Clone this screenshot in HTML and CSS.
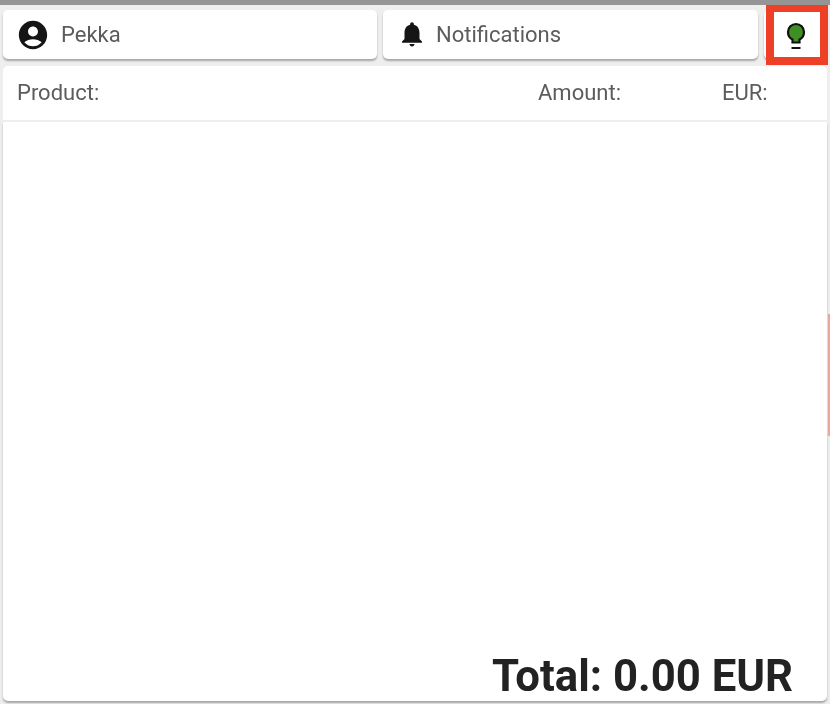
FILE: index.html
```html
<!DOCTYPE html>
<html>
  <head>
    <title>Checkout</title>
    <link rel="stylesheet" href="styles.css">
  </head>
  <body>
    <div id="topbar"></div>
    <div id="toolbar">
      <button class="tool">
        <svg class="icon" viewBox="0 0 24 24"><path d="M12 2C6.48 2 2 6.48 2 12s4.48 10 10 10 10-4.48 10-10S17.52 2 12 2zm0 4c1.93 0 3.5 1.57 3.5 3.5S13.93 13 12 13s-3.5-1.57-3.5-3.5S10.07 6 12 6zm0 14c-2.03 0-4.43-.82-6.14-2.88C7.55 15.8 9.68 15 12 15s4.45.8 6.14 2.12C16.43 19.18 14.03 20 12 20z"/></svg>
        <span>Pekka</span>
      </button>
      <button class="tool" id="notify">
        <svg class="icon" viewBox="0 0 24 24"><path d="M12 22c1.1 0 2-.9 2-2h-4c0 1.1.9 2 2 2zm6-6v-5c0-3.07-1.64-5.64-4.500-6.320V4c0-.83-.67-1.500-1.500-1.500s-1.500.67-1.500 1.500v.68C7.630 5.360 6 7.920 6 11v5l-2 2v1h16v-1l-2-2z"/></svg>
        <span>Notifications</span>
      </button>
      <button class="tool" id="status">
        <svg id="bulb" viewBox="0 0 24 32">
          <path d="M8.500 23.500v-3C5.500 19 4 16 4 13a8 8 0 0 1 16 0c0 3-1.500 6-4.500 7.500v3z" fill="#3f8f24" stroke="#111" stroke-width="2.200"/>
          <path d="M7.500 29h9" stroke="#111" stroke-width="2"/>
        </svg>
      </button>
    </div>
    <div id="columns">
      <span>Product:</span>
      <span>Amount:</span>
      <span>EUR:</span>
    </div>
    <div id="cart">
      <div id="total">Total: 0.00 EUR</div>
    </div>
    <div id="highlight"></div>
    <div id="edge"></div>
  </body>
</html>
```

FILE: styles.css
```css
html,
body {
  height: 100%;
}

body {
  margin: 0;
  background-color: #eeeeee;
  font-family: Roboto, sans-serif;
  color: #5c5c5c;
  display: flex;
  flex-direction: column;
  overflow: hidden;
}

/* the reference is a soft, scaled-up capture */
#topbar,
#toolbar,
#columns,
#cart {
  filter: blur(0.6px);
}

#topbar {
  height: 5px;
  background-color: #959595;
}

#toolbar {
  display: flex;
  gap: 6px;
  padding: 5px 3px 0 3px;
}

.tool {
  flex: 1;
  height: 49px;
  display: flex;
  align-items: center;
  gap: 11px;
  padding: 0 0 0 13px;
  border: none;
  border-radius: 5px;
  background-color: white;
  color: inherit;
  font-family: inherit;
  font-size: 22px;
  box-shadow: 0 2px 2px 0 rgba(0, 0, 0, 0.3);
}

.icon {
  width: 34px;
  height: 34px;
  fill: #151515;
}

#notify {
  gap: 9px;
  padding-left: 14px;
}

#notify .icon {
  width: 30px;
  height: 30px;
  margin-bottom: 2px;
}

#status {
  flex: 0 0 63px;
  padding: 0;
  justify-content: center;
}

#bulb {
  width: 24px;
  height: 32px;
  fill: none;
}

#columns {
  display: grid;
  grid-template-columns: 521px 184px 1fr;
  align-items: center;
  height: 52px;
  margin: 7px 3px 0 3px;
  padding: 0 0 2px 14px;
  background-color: white;
  border-radius: 5px 5px 0 0;
  font-size: 22px;
}

#cart {
  flex: 1;
  display: flex;
  align-items: flex-end;
  justify-content: flex-end;
  margin: 2px 3px 3px 3px;
  padding-right: 34px;
  background-color: white;
  border-radius: 0 0 5px 5px;
  box-shadow: 0 2px 2px 0 rgba(0, 0, 0, 0.3);
}

#total {
  color: #222222;
  font-size: 43.7px;
  font-weight: 700;
  line-height: 50px;
}

/* annotation drawn over the status button */
#highlight {
  position: absolute;
  left: 766px;
  top: 5px;
  width: 46px;
  height: 45px;
  border: solid #ee4027;
  border-width: 7px 8px 8px 8px;
}

#edge {
  position: absolute;
  left: 828px;
  top: 314px;
  width: 2px;
  height: 122px;
  background-color: #e8a89e;
}
```
